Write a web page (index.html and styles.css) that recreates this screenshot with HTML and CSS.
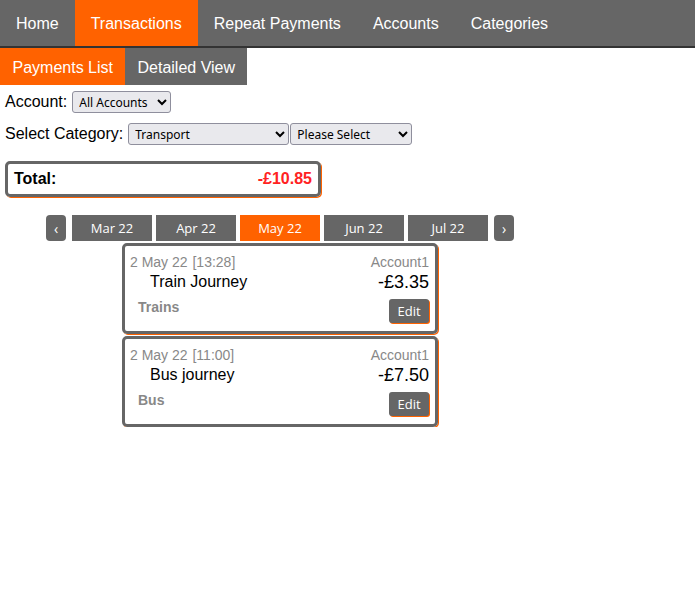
FILE: index.html
```html
<!DOCTYPE html>
<html>
<head>
<meta charset="utf-8">
<link rel="stylesheet" href="styles.css">
</head>
<body>
<nav class="topnav">
  <a class="tab">Home</a>
  <a class="tab active">Transactions</a>
  <a class="tab">Repeat Payments</a>
  <a class="tab">Accounts</a>
  <a class="tab">Categories</a>
</nav>
<nav class="subnav">
  <a class="subtab active">Payments List</a>
  <a class="subtab">Detailed View</a>
</nav>
<main class="content">
  <div class="row">
    <label class="lbl">Account:</label>
    <select class="sel sel-account"><option>All Accounts</option></select>
  </div>
  <div class="row">
    <label class="lbl">Select Category:</label>
    <select class="sel sel-cat"><option>Transport</option></select>
    <select class="sel sel-sub"><option>Please Select</option></select>
  </div>
  <div class="total">
    <span class="total-label">Total:</span>
    <span class="total-value">-£10.85</span>
  </div>
  <div class="pager">
    <button class="pg arrow">‹</button>
    <div class="months">
      <button class="pg month">Mar 22</button>
      <button class="pg month">Apr 22</button>
      <button class="pg month current">May 22</button>
      <button class="pg month">Jun 22</button>
      <button class="pg month">Jul 22</button>
    </div>
    <button class="pg arrow">›</button>
  </div>
  <div class="list">
    <div class="card">
      <div class="line1"><span class="date">2 May 22 <span class="time">[13:28]</span></span><span class="acct">Account1</span></div>
      <div class="line2"><span class="desc">Train Journey</span><span class="amt">-£3.35</span></div>
      <div class="line3"><span class="cat">Trains</span><button class="edit">Edit</button></div>
    </div>
    <div class="card">
      <div class="line1"><span class="date">2 May 22 <span class="time">[11:00]</span></span><span class="acct">Account1</span></div>
      <div class="line2"><span class="desc">Bus journey</span><span class="amt">-£7.50</span></div>
      <div class="line3"><span class="cat">Bus</span><button class="edit">Edit</button></div>
    </div>
  </div>
</main>
</body>
</html>
```
FILE: styles.css
```css
* { box-sizing: border-box; }
body {
  margin: 0;
  font-family: "Liberation Sans", Arial, sans-serif;
  color: #000;
  background: #fff;
}
.topnav {
  display: flex;
  background: #666;
  border-bottom: 2px solid #333;
  height: 48px;
}
.tab {
  color: #fff;
  font-size: 16px;
  padding: 2px 16px 0 16px;
  line-height: 44px;
}
.tab.active { background: #ff6200; }
.subnav {
  display: flex;
  height: 37px;
}
.subtab {
  background: #666;
  color: #fff;
  font-size: 16px;
  padding: 2px 12px 0 12.5px;
  line-height: 35px;
}
.subtab.active { background: #ff6200; }
.content { padding: 6px 5px 0 5px; }
.row {
  display: flex;
  align-items: center;
  height: 22px;
  margin-bottom: 10px;
}
.lbl { font-size: 16px; margin-right: 5px; }
.sel {
  font-family: "Noto Sans", "DejaVu Sans", sans-serif;
  font-size: 12px;
  height: 22px;
  background: #e9e9ed;
  border: 1px solid #8f8f9d;
  border-radius: 3px;
  padding: 0 2px;
  color: #000;
}
.sel-account { width: 99px; }
.sel-cat { width: 161px; }
.sel-sub { width: 122px; margin-left: 1px; }
.total {
  display: flex;
  justify-content: space-between;
  align-items: center;
  width: 316px;
  height: 36px;
  margin-top: 16px;
  border: 3px solid #666;
  border-radius: 5px;
  box-shadow: 1px 1px 0 #ff6200;
  padding: 0 6px 0 6px;
  font-weight: bold;
  font-size: 16px;
}
.total-value { color: #f22; }
.pager {
  display: flex;
  gap: 6px;
  margin: 18px 0 0 41px;
}
.months { display: flex; gap: 4px; }
.pg {
  font-family: "Open Sans", "Noto Sans", sans-serif;
  font-size: 13px;
  color: #fff;
  background: #666;
  border: none;
  height: 26px;
  padding: 0;
}
.arrow { width: 20px; border-radius: 4px; font-size: 14px; }
.month { width: 80px; }
.month.current { background: #ff6200; }
.list {
  margin-left: 117px;
  margin-top: 2px;
  display: flex;
  flex-direction: column;
  gap: 2px;
}
.card {
  width: 316px;
  border: 3px solid #666;
  border-radius: 5px;
  box-shadow: 1px 1px 0 #ff6200;
  padding: 8px 6px 8px 5px;
}
.line1, .line2, .line3 { display: flex; justify-content: space-between; }
.line1 { color: #888; font-size: 14px; line-height: 16px; }
.time { font-size: 14px; margin-left: 1px; }
.line2 { font-size: 16px; line-height: 20px; align-items: flex-end; margin-top: 2px; }
.desc { margin-left: 20px; }
.amt { font-size: 18px; }
.line3 { align-items: flex-start; margin-top: 3px; }
.cat { color: #888; font-weight: bold; font-size: 14px; margin-left: 8px; margin-top: 4px; }
.edit {
  font-family: "Open Sans", "Noto Sans", sans-serif;
  font-size: 13px;
  color: #fff;
  background: #666;
  border: none;
  border-radius: 3px;
  width: 40px;
  height: 24px;
  padding: 0;
  margin-top: 4px;
  box-shadow: 1px 1px 0 #ff6200;
}
```
